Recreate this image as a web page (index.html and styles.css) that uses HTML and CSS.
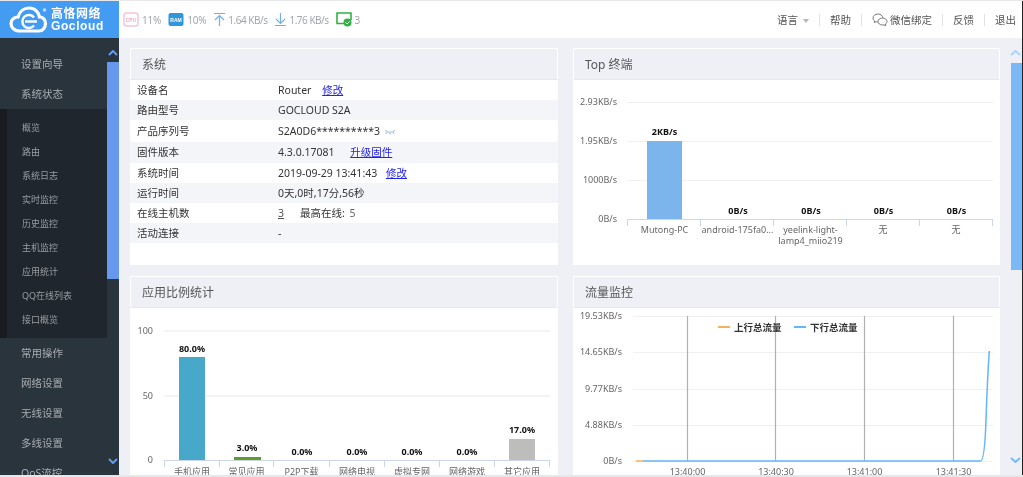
FILE: index.html
```html
<!DOCTYPE html>
<html lang="zh-CN">
<head>
    <meta charset="UTF-8">
    <meta name="viewport" content="width=device-width, initial-scale=1.0">
    <title>高恪网络 Gocloud</title>
    <link rel="stylesheet" href="styles.css">
</head>
<body>

<div class="app">
    <aside class="sidebar">
        <div class="logo">
            <svg class="logo-mark" width="40" height="30" viewBox="0 0 40 30">
                <path d="M11 26 C5 26 2 22 2 18.500 C2 14.500 5.500 12 9 12 C10.500 6.500 15 3 20 3 C26 3 30 7.500 30.500 12 C34 12 36.500 15 36.500 18.500 C36.500 23 33.500 26 30 26 Z" fill="none" stroke="#fff" stroke-width="3.200"/>
                <path d="M25 12.500 A6.500 6.500 0 1 0 25 20.500" fill="none" stroke="#fff" stroke-width="2.400"/>
                <path d="M16 16.500 H28" stroke="#fff" stroke-width="2.400"/>
                <circle cx="35.500" cy="5" r="1.800" fill="#bcdcfb"/>
            </svg>
            <div class="logo-text">
                <span class="logo-cn">高恪网络</span>
                <span class="logo-en">Gocloud</span>
            </div>
        </div>
        <nav class="menu">
            <a class="menu-item">设置向导</a>
            <a class="menu-item">系统状态</a>
            <div class="submenu">
                <a>概览</a>
                <a>路由</a>
                <a>系统日志</a>
                <a>实时监控</a>
                <a>历史监控</a>
                <a>主机监控</a>
                <a>应用统计</a>
                <a>QQ在线列表</a>
                <a>接口概览</a>
            </div>
            <a class="menu-item">常用操作</a>
            <a class="menu-item">网络设置</a>
            <a class="menu-item">无线设置</a>
            <a class="menu-item">多线设置</a>
            <a class="menu-item">QoS流控</a>
        </nav>
        <div class="side-thumb"></div>
        <svg class="side-arrow side-arrow-up" width="10" height="6" viewBox="0 0 10 6"><path d="M1 5 L5 1 L9 5" fill="none" stroke="#5f9cf0" stroke-width="2"/></svg>
        <svg class="side-arrow side-arrow-down" width="10" height="6" viewBox="0 0 10 6"><path d="M1 1 L5 5 L9 1" fill="none" stroke="#5f9cf0" stroke-width="2"/></svg>
    </aside>

    <div class="main">
        <header class="topbar">
            <div class="stats">
                <svg class="stat-icon" width="16" height="15" viewBox="0 0 16 15">
                    <rect x="1" y="1" width="14" height="13" rx="2.500" fill="#fff" stroke="#f6c4da" stroke-width="1.500"/>
                    <text x="8" y="9.500" class="icon-text cpu-text">CPU</text>
                </svg>
                <span class="stat-val">11%</span>
                <svg class="stat-icon" width="16" height="15" viewBox="0 0 16 15">
                    <rect x="0.500" y="1" width="15" height="13" rx="2" fill="#2f97dc"/>
                    <text x="8" y="9.500" class="icon-text">RAM</text>
                </svg>
                <span class="stat-val">10%</span>
                <svg class="stat-icon" width="13" height="15" viewBox="0 0 13 15">
                    <path d="M1 1.500 H12 M6.500 14 V3.500 M2 8 L6.500 3.500 L11 8" fill="none" stroke="#6fb1e6" stroke-width="1.200"/>
                </svg>
                <span class="stat-val stat-rate">1.64 KB/s</span>
                <svg class="stat-icon" width="13" height="15" viewBox="0 0 13 15">
                    <path d="M1 13.500 H12 M6.500 1 V11.500 M2 7 L6.500 11.500 L11 7" fill="none" stroke="#6fb1e6" stroke-width="1.200"/>
                </svg>
                <span class="stat-val stat-rate">1.76 KB/s</span>
                <svg class="stat-icon" width="16" height="15" viewBox="0 0 16 15">
                    <path d="M9 11.500 H1 V1 H15 V8" fill="none" stroke="#2fb344" stroke-width="1.600"/>
                    <circle cx="11.500" cy="10.500" r="4" fill="#2fb344"/>
                    <path d="M9.500 10.500 L11 12 L13.500 9.500" fill="none" stroke="#fff" stroke-width="1"/>
                </svg>
                <span class="stat-val">3</span>
            </div>
            <div class="top-links">
                <span class="top-link">语言<i class="caret"></i></span>
                <span class="top-link">帮助</span>
                <span class="top-link">
                    <svg class="wechat" width="16" height="14" viewBox="0 0 16 14">
                        <path d="M6 1 C3 1 1 3 1 5 C1 6.300 1.700 7.300 2.700 8 L2.300 9.500 L4.200 8.700 C4.700 8.800 5.200 8.900 5.700 8.900 M11 4.800 C10.500 2.600 8.400 1 6 1" fill="none" stroke="#777" stroke-width="1"/>
                        <path d="M10.500 5 C8 5 6 6.500 6 8.500 C6 10.500 8 12 10.500 12 C11 12 11.500 11.900 12 11.800 L13.800 12.800 L13.400 11.100 C14.400 10.500 15 9.600 15 8.500 C15 6.500 13 5 10.500 5 Z" fill="none" stroke="#777" stroke-width="1"/>
                    </svg>微信绑定
                </span>
                <span class="top-link">反馈</span>
                <span class="top-link">退出</span>
            </div>
        </header>

        <div class="content">
            <section class="panel">
                <h3 class="panel-head">系统</h3>
                <table class="info">
                    <tr><td>设备名</td><td>Router <a class="link gap-l">修改</a></td></tr>
                    <tr><td>路由型号</td><td>GOCLOUD S2A</td></tr>
                    <tr class="tall"><td>产品序列号</td><td>S2A0D6**********3
                        <svg class="eye" width="12" height="6" viewBox="0 0 12 6"><path d="M1 1 C4 4 8 4 11 1 M3 3 L2 5 M6 4 V5.500 M9 3 L10 5" fill="none" stroke="#8fbde2" stroke-width="1"/></svg>
                    </td></tr>
                    <tr><td>固件版本</td><td>4.3.0.17081 <a class="link gap-xl">升级固件</a></td></tr>
                    <tr><td>系统时间</td><td>2019-09-29 13:41:43 <a class="link gap-m">修改</a></td></tr>
                    <tr><td>运行时间</td><td>0天,0时,17分,56秒</td></tr>
                    <tr><td>在线主机数</td><td><a class="host-link">3</a><span class="max-host">最高在线: <em>5</em></span></td></tr>
                    <tr><td>活动连接</td><td>-</td></tr>
                </table>
            </section>

            <section class="panel">
                <h3 class="panel-head">Top 终端</h3>
                <svg class="chart" width="427" height="185" viewBox="573 80 427 185">
                    <g class="grid">
                        <path d="M627 102.500 H993 M627 141.500 H993 M627 180.500 H993"/>
                    </g>
                    <rect x="647" y="141" width="35" height="78" fill="#7cb5ec"/>
                    <path class="axis" d="M627 219.500 H993 M627.500 219 V226 M700.500 219 V226 M773.500 219 V226 M846.500 219 V226 M919.500 219 V226 M992.500 219 V226"/>
                    <g class="y-label">
                        <text x="617" y="105">2.93KB/s</text>
                        <text x="617" y="144">1.95KB/s</text>
                        <text x="617" y="183">1000B/s</text>
                        <text x="617" y="222">0B/s</text>
                    </g>
                    <g class="val-label">
                        <text x="664.500" y="135">2KB/s</text>
                        <text x="738" y="214">0B/s</text>
                        <text x="811" y="214">0B/s</text>
                        <text x="883.500" y="214">0B/s</text>
                        <text x="956.500" y="214">0B/s</text>
                    </g>
                    <g class="x-label">
                        <text x="664.500" y="233">Mutong-PC</text>
                        <text x="737.500" y="233">android-175fa0...</text>
                        <text x="810.500" y="233">yeelink-light-</text>
                        <text x="810.500" y="244">lamp4_miio219</text>
                        <text x="883" y="233">无</text>
                        <text x="956" y="233">无</text>
                    </g>
                </svg>
            </section>

            <section class="panel">
                <h3 class="panel-head">应用比例统计</h3>
                <svg class="chart" width="428" height="185" viewBox="130 308 428 185">
                    <g class="grid grid-thick">
                        <path d="M164 331 H550 M164 396 H550"/>
                    </g>
                    <rect x="179" y="357" width="26" height="103" fill="#47a8c9"/>
                    <rect x="234" y="457" width="27" height="3" fill="#5f9a2c"/>
                    <rect x="509" y="439" width="26" height="21" fill="#bdbdbb"/>
                    <path class="axis" d="M164 460.500 H550 M164.500 460 V467 M219.500 460 V467 M273.500 460 V467 M329.500 460 V467 M384.500 460 V467 M439.500 460 V467 M494.500 460 V467 M549.500 460 V467"/>
                    <g class="y-label">
                        <text x="153" y="334">100</text>
                        <text x="153" y="399">50</text>
                        <text x="153" y="463">0</text>
                    </g>
                    <g class="val-label">
                        <text x="192" y="352">80.0%</text>
                        <text x="247" y="451">3.0%</text>
                        <text x="302" y="455">0.0%</text>
                        <text x="357" y="455">0.0%</text>
                        <text x="412" y="455">0.0%</text>
                        <text x="467" y="455">0.0%</text>
                        <text x="522" y="433">17.0%</text>
                    </g>
                    <g class="x-label">
                        <text x="192" y="475">手机应用</text>
                        <text x="246.500" y="475">常见应用</text>
                        <text x="301.500" y="475">P2P下载</text>
                        <text x="357" y="475">网络电视</text>
                        <text x="412" y="475">虚拟专网</text>
                        <text x="467" y="475">网络游戏</text>
                        <text x="522" y="475">其它应用</text>
                    </g>
                </svg>
            </section>

            <section class="panel">
                <h3 class="panel-head">流量监控</h3>
                <svg class="chart" width="427" height="185" viewBox="573 308 427 185">
                    <g class="grid">
                        <path d="M633 316.500 H993 M633 352.500 H993 M633 389.500 H993 M633 425.500 H993 M633 461.500 H993"/>
                    </g>
                    <path class="v-grid" d="M687.500 316 V461 M775.500 316 V461 M864.500 316 V461 M953.500 316 V461"/>
                    <path d="M636 461 H643" stroke="#f7b060" stroke-width="1.500" fill="none"/>
                    <path d="M643 461 H980.500 C983 461 985 450 986 420 C987 390 988 370 989.300 351" stroke="#63b5fb" stroke-width="1.500" fill="none"/>
                    <path d="M718 327 H730" stroke="#f7b060" stroke-width="2"/>
                    <path d="M794 327 H806" stroke="#63b5fb" stroke-width="2"/>
                    <g class="legend">
                        <text x="734" y="330.500">上行总流量</text>
                        <text x="810" y="330.500">下行总流量</text>
                    </g>
                    <g class="y-label">
                        <text x="622" y="319">19.53KB/s</text>
                        <text x="622" y="355">14.65KB/s</text>
                        <text x="622" y="392">9.77KB/s</text>
                        <text x="622" y="428">4.88KB/s</text>
                        <text x="622" y="464">0B/s</text>
                    </g>
                    <g class="x-label">
                        <text x="687.500" y="475">13:40:00</text>
                        <text x="776" y="475">13:40:30</text>
                        <text x="864.500" y="475">13:41:00</text>
                        <text x="953.500" y="475">13:41:30</text>
                    </g>
                </svg>
            </section>
        </div>

        <div class="page-thumb"></div>
        <svg class="page-arrow page-arrow-up" width="11" height="6" viewBox="0 0 11 6"><path d="M1 5 L5.500 1 L10 5" fill="none" stroke="#a9d4fb" stroke-width="2"/></svg>
        <svg class="page-arrow page-arrow-down" width="11" height="6" viewBox="0 0 11 6"><path d="M1 1 L5.500 5 L10 1" fill="none" stroke="#7ab8f8" stroke-width="2"/></svg>
    </div>
</div>

</body>
</html>
```

FILE: styles.css
```css
* {
    box-sizing: border-box;
}
html, body {
    margin: 0;
    height: 477px;
    overflow: hidden;
}
body {
    background-color: #e6e7e8;
    font-family: "Noto Sans", "Noto Sans CJK SC", sans-serif;
    font-size: 10.5px;
    color: #444;
}
.app {
    display: flex;
    height: 474px;
    margin-top: 1px;
    overflow: hidden;
    border-right: 1px solid #222;
    filter: blur(0.45px);
}

/* sidebar */
.sidebar {
    position: relative;
    width: 119px;
    flex: none;
    background-color: #2a343d;
    overflow: hidden;
}
.logo {
    display: flex;
    align-items: center;
    gap: 2px;
    height: 37px;
    padding-left: 9px;
    background-color: #439cf2;
    color: #fff;
}
.logo-text {
    display: flex;
    flex-direction: column;
    line-height: 13px;
    font-weight: 700;
}
.logo-cn {
    font-size: 12px;
    letter-spacing: 0.500px;
}
.logo-en {
    font-family: "Liberation Sans", sans-serif;
    font-size: 12px;
    letter-spacing: 0.600px;
}
.menu {
    display: flex;
    flex-direction: column;
    padding-top: 11px;
}
.menu-item {
    flex: none;
    height: 30px;
    line-height: 30px;
    padding-left: 21px;
    color: #a9adb1;
}
.submenu {
    flex: none;
    display: flex;
    flex-direction: column;
    height: 229px;
    padding-top: 7px;
    margin-left: 7px;
    margin-right: 12px;
    background-color: #1f262d;
    box-shadow: -7px 0 0 #181c20;
}
.submenu a {
    height: 24px;
    line-height: 24px;
    padding-left: 15px;
    font-size: 9px;
    color: #9a9ea3;
}
.side-thumb {
    position: absolute;
    left: 107px;
    top: 61px;
    width: 12px;
    height: 217px;
    background-color: #6699ee;
}
.side-arrow {
    position: absolute;
    left: 108px;
}
.side-arrow-up {
    top: 49px;
}
.side-arrow-down {
    top: 457px;
}

/* top bar */
.main {
    position: relative;
    flex: 1;
    min-width: 0;
    background-color: #eef0f5;
}
.topbar {
    display: flex;
    justify-content: space-between;
    align-items: center;
    height: 37px;
    padding-left: 4px;
    background-color: #fff;
}
.stats {
    display: flex;
    align-items: center;
}
.stat-icon {
    flex: none;
}
.stat-val {
    margin-left: 3px;
    margin-right: 7px;
    color: #a2a7ae;
    font-size: 10px;
    letter-spacing: -0.200px;
}
.stat-rate {
    margin-left: 2px;
    letter-spacing: -0.500px;
}
.icon-text {
    font-family: "Liberation Sans", sans-serif;
    font-size: 5px;
    font-weight: 700;
    fill: #fff;
    text-anchor: middle;
}
.cpu-text {
    fill: #f3a9c8;
}
.top-links {
    display: flex;
    align-items: center;
}
.top-link {
    display: flex;
    align-items: center;
    padding: 0 10px;
    height: 12px;
    color: #555;
    border-left: 1px solid #dfe1e5;
}
.top-link:first-child {
    border-left: none;
}
.top-link:last-child {
    padding-right: 6px;
}
.caret {
    width: 0;
    height: 0;
    margin-left: 5px;
    margin-top: 2px;
    border-left: 3px solid transparent;
    border-right: 3px solid transparent;
    border-top: 4px solid #b5b5b5;
}
.wechat {
    margin-right: 2px;
}

/* panels */
.content {
    display: grid;
    grid-template-columns: 428px 427px;
    grid-template-rows: 217px 217px;
    column-gap: 15px;
    row-gap: 11px;
    padding: 10px 0 0 11px;
}
.panel {
    background-color: #fff;
    overflow: hidden;
}
.panel-head {
    margin: 0;
    height: 32px;
    line-height: 32px;
    padding-left: 11px;
    font-size: 12px;
    font-weight: 400;
    color: #555;
    background-color: #eff0f5;
    border: 1px solid #fff;
    border-bottom: 1px solid #e7e7f0;
}
.info {
    width: 100%;
    border-collapse: collapse;
    color: #333;
}
.info tr {
    height: 20.200px;
}
.info tr.tall {
    height: 22px;
}
.info tr:nth-child(even) {
    background-color: #f4f5f8;
}
.info td {
    padding: 0;
    line-height: 14px;
}
.info td:first-child {
    width: 148px;
    padding-left: 7px;
}
.link {
    color: #2222ee;
    text-decoration: underline;
}
.gap-l {
    margin-left: 8px;
}
.gap-xl {
    margin-left: 13px;
}
.gap-m {
    margin-left: 6px;
}
.host-link {
    text-decoration: underline;
    color: #555;
}
.max-host {
    margin-left: 16px;
}
.max-host em {
    font-style: normal;
    margin-left: 2px;
    color: #666;
}
.eye {
    margin-left: 1px;
}

/* charts */
.chart {
    display: block;
    font-family: "Noto Sans", "Noto Sans CJK SC", sans-serif;
    font-size: 9px;
}
.grid path {
    stroke: #eef0f3;
    stroke-width: 1;
    fill: none;
}
.grid-thick path {
    stroke: #f2f3f4;
    stroke-width: 2;
}
.axis {
    stroke: #ccd6eb;
    stroke-width: 1;
    fill: none;
}
.v-grid {
    stroke: #b0b0b0;
    stroke-width: 1.200;
    fill: none;
}
.y-label text {
    text-anchor: end;
    fill: #666;
}
.x-label text {
    text-anchor: middle;
    fill: #666;
}
.val-label text {
    text-anchor: middle;
    font-weight: 700;
    fill: #111;
}
.legend text {
    font-size: 9.500px;
    font-weight: 700;
    fill: #333;
}

/* right scrollbar */
.page-thumb {
    position: absolute;
    right: 0;
    top: 62px;
    width: 11px;
    height: 207px;
    background-color: #7ab8f8;
}
.page-arrow {
    position: absolute;
    right: 1px;
}
.page-arrow-up {
    top: 49px;
}
.page-arrow-down {
    top: 456px;
}
```
